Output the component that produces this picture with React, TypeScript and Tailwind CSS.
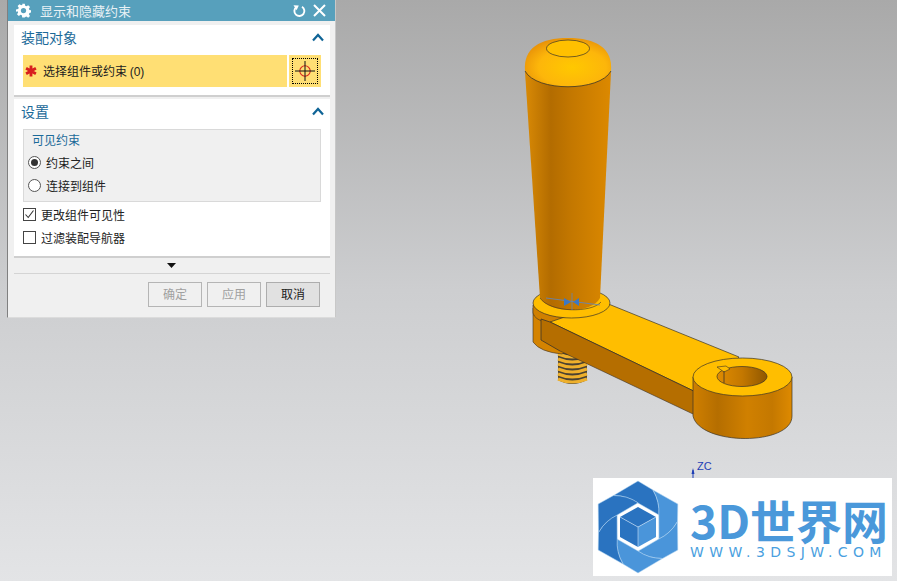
import React from "react";

const cjk = { fontFamily: '"Noto Sans CJK SC", "Liberation Sans", sans-serif' };

function Chevron() {
  return (
    <svg width="12" height="9" viewBox="0 0 12 9" className="block">
      <path d="M1 7.5 L6 2 L11 7.5" fill="none" stroke="#0f6496" strokeWidth="2.2" />
    </svg>
  );
}

function SectionHead({ title }: { title: string }) {
  return (
    <div className="h-[30px] flex items-center justify-between pl-[7px] pr-[6px] pb-[5px]">
      <span className="text-[14px] text-[#1b6a99]">{title}</span>
      <Chevron />
    </div>
  );
}

function Radio({ on, label }: { on?: boolean; label: string }) {
  return (
    <div className="flex items-center h-[23px] pl-[4px] gap-[5px]">
      <span className="w-[13px] h-[13px] rounded-full border border-[#555] bg-white flex items-center justify-center">
        {on && <span className="w-[7px] h-[7px] rounded-full bg-[#333]" />}
      </span>
      <span className="text-[12px] text-[#222]">{label}</span>
    </div>
  );
}

function Check({ on, label }: { on?: boolean; label: string }) {
  return (
    <div className="flex items-center h-[23px] gap-[5px]">
      <span className="w-[13px] h-[13px] border border-[#444] bg-white flex items-center justify-center">
        {on && (
          <svg width="11" height="11" viewBox="0 0 11 11">
            <path d="M1.5 5.5 L4.2 8.5 L9.5 1.5" fill="none" stroke="#333" strokeWidth="1.1" />
          </svg>
        )}
      </span>
      <span className="text-[12px] text-[#222]">{label}</span>
    </div>
  );
}

function Btn({ label, off }: { label: string; off?: boolean }) {
  return (
    <div
      className={
        off
          ? "w-[54px] h-[25px] border border-[#b5b5b5] bg-[#f0f0f0] text-[#a0a0a0] text-[12px] flex items-center justify-center pb-[1px]"
          : "w-[54px] h-[25px] border border-[#adadad] bg-[#e1e1e1] text-[#222] text-[12px] flex items-center justify-center pb-[1px]"
      }
    >
      {label}
    </div>
  );
}

function Dialog() {
  return (
    <div
      style={cjk}
      className="absolute left-[7px] top-0 w-[329px] h-[318px] bg-[#f0f0f0] border-l border-l-[#808080] border-r border-r-[#c8c8c8] border-b border-b-[#dcdcdc] flex flex-col"
    >
      <div className="h-[21px] bg-[#57a0bc] flex items-center pl-[8px] pr-[9px] shrink-0">
        <svg width="15" height="15" viewBox="0 0 24 24" className="block">
          <path
            d="M10 1h4l.7 3.2 2 .9 2.8-1.7 2.9 2.9-1.8 2.7.9 2 3.2.7v3.5l-3.2.7-.9 2 1.8 2.8-2.9 2.8-2.8-1.7-2 .8L14 23h-4l-.7-3.3-2-.8-2.8 1.7-2.9-2.8 1.8-2.8-.9-2L0 13.8v-3.5l3.5-.7.9-2-1.8-2.7 2.9-2.9 2.8 1.7 2-.9z"
            fill="#fff"
          />
          <circle cx="12" cy="12" r="4.2" fill="#57a0bc" />
        </svg>
        <span className="ml-[9px] text-[13px] text-[#e8f1f5] leading-none">显示和隐藏约束</span>
        <span className="ml-auto flex items-center gap-[7px]">
          <svg width="14" height="14" viewBox="0 0 14 14" className="block">
            <path d="M4.2 3.2 A5 5 0 1 0 10 2.8" fill="none" stroke="#fff" strokeWidth="1.9" />
            <path d="M1.5 1.2 L6.8 1.6 L4.6 6.2 Z" fill="#fff" />
          </svg>
          <svg width="13" height="13" viewBox="0 0 13 13" className="block">
            <path d="M1 1 L12 12 M12 1 L1 12" stroke="#fff" strokeWidth="2" />
          </svg>
        </span>
      </div>

      <div className="ml-[6px] mr-[5px] mt-[4px] bg-white h-[72px] border-b-2 border-b-[#cfcfcf] shrink-0">
        <SectionHead title="装配对象" />
        <div className="flex px-[9px] gap-[2px]">
          <div className="flex-1 h-[32px] bg-[#ffdf74] flex items-center pl-[2px] gap-[6px]">
            <svg width="12" height="12" viewBox="0 0 11 11" className="block">
              <path d="M5.5 0.5 V10.5 M1 3 L10 8 M10 3 L1 8" stroke="#d81e1e" strokeWidth="2.6" />
            </svg>
            <span className="text-[12px] text-[#222]">
              选择组件或约束 <span style={{ fontFamily: '"Liberation Sans", sans-serif' }}>(0)</span>
            </span>
          </div>
          <div className="w-[32px] h-[32px] bg-[#ffdf74] flex items-center justify-center">
            <div className="w-[26px] h-[26px] border border-dotted border-black flex items-center justify-center">
              <svg width="20" height="20" viewBox="0 0 20 20" className="block">
                <circle cx="10" cy="10" r="5.2" fill="none" stroke="#d8281e" strokeWidth="1.1" />
                <path d="M0 10 H20 M10 0 V20" stroke="#111" strokeWidth="1" />
              </svg>
            </div>
          </div>
        </div>
      </div>

      <div className="ml-[6px] mr-[5px] mt-[2px] bg-white h-[159px] border-b-2 border-b-[#cfcfcf] shrink-0">
        <SectionHead title="设置" />
        <div className="mx-[9px]">
          <div className="h-[73px] bg-[#f0f0f0] border border-[#d9d9d9] pt-[1px]">
            <div className="text-[12px] text-[#1b6a99] pl-[8px] h-[20px] leading-[18px]">可见约束</div>
            <Radio on label="约束之间" />
            <Radio label="连接到组件" />
          </div>
          <div className="mt-[1px]">
            <Check on label="更改组件可见性" />
            <Check label="过滤装配导航器" />
          </div>
        </div>
      </div>

      <div className="ml-[6px] mr-[5px] h-[16px] border-b border-b-[#d4d4d4] flex items-center justify-center shrink-0">
        <svg width="9" height="5" viewBox="0 0 9 5" className="block -translate-x-[1px]">
          <path d="M0 0 H9 L4.5 5 Z" fill="#111" />
        </svg>
      </div>

      <div className="flex justify-end gap-[5px] pr-[15px] pt-[8px]">
        <Btn off label="确定" />
        <Btn off label="应用" />
        <Btn label="取消" />
      </div>
    </div>
  );
}

function Part() {
  const line = "#3a3328";
  return (
    <svg width="897" height="581" viewBox="0 0 897 581" className="absolute left-0 top-0 block">
      <defs>
        <linearGradient id="cone" x1="0" x2="1" y1="0" y2="0">
          <stop offset="0" stopColor="#d98a05" />
          <stop offset="0.3" stopColor="#b36c00" />
          <stop offset="0.55" stopColor="#c47800" />
          <stop offset="1" stopColor="#dc8900" />
        </linearGradient>
        <radialGradient id="dome" cx="0.55" cy="0.6" r="0.65">
          <stop offset="0" stopColor="#ffc800" />
          <stop offset="0.6" stopColor="#fdb60a" />
          <stop offset="1" stopColor="#e58d08" />
        </radialGradient>
        <linearGradient id="ringSide" x1="0" x2="1" y1="0" y2="0">
          <stop offset="0" stopColor="#cf7f00" />
          <stop offset="0.25" stopColor="#b56e00" />
          <stop offset="0.55" stopColor="#d08000" />
          <stop offset="0.8" stopColor="#c47800" />
          <stop offset="1" stopColor="#de8a00" />
        </linearGradient>
        <linearGradient id="hole" x1="0" x2="1" y1="0" y2="0">
          <stop offset="0" stopColor="#e08c00" />
          <stop offset="0.5" stopColor="#c47800" />
          <stop offset="1" stopColor="#8f5700" />
        </linearGradient>
      </defs>

      {/* screw */}
      <path d="M558 352 H587 V380 Q572 388 558 380 Z" fill="#4a4232" />
      {[354, 359, 364, 369, 374, 379].map((y) => (
        <path key={y} d={`M558 ${y} Q572 ${y + 6} 587 ${y}`} fill="none" stroke="#eeb02c" strokeWidth="3" />
      ))}

      {/* collar block */}
      <path
        d="M533 308 V342 Q540 352 562 354 L600 330 L610 308 Z"
        fill="#d48300"
        stroke={line}
        strokeWidth="0.6"
      />
      <path d="M533 305 V313 C536 330 606 330 610 313 V305 Z" fill="#d08000" stroke={line} strokeWidth="0.6" />

      {/* arm */}
      <path d="M606 303 L739 357 L704 396 L550 322 Z" fill="#ffbe00" stroke={line} strokeWidth="0.7" />
      <path d="M541 319 L550 322 L704 396 V420 L693 414 L560 351 L541 340 Z" fill="#b56e00" />
      <path d="M541 319 L550 322 L704 396 V420 L693 414 M560 351 L541 340 V319" fill="none" stroke={line} strokeWidth="0.8" />
      <path d="M560 351 L693 414" fill="none" stroke={line} strokeWidth="0.6" />

      {/* collar top */}
      <ellipse cx="571.5" cy="303" rx="38.5" ry="15" fill="#ffbe00" stroke={line} strokeWidth="0.7" />

      {/* ring */}
      <path
        d="M693 377 V416 C700 446 792 446 792 416 V377 Z"
        fill="url(#ringSide)"
        stroke={line}
        strokeWidth="0.7"
      />
      <ellipse cx="742.5" cy="377" rx="49.5" ry="19" fill="#ffbe00" stroke={line} strokeWidth="0.7" />
      <ellipse cx="742" cy="376.5" rx="25" ry="10" fill="url(#hole)" stroke={line} strokeWidth="0.7" />
      <path d="M717 367 L726 366 L730 369 L724 372 Z" fill="#ffbe00" stroke={line} strokeWidth="0.6" />
      <path d="M724 371 V383" stroke={line} strokeWidth="0.8" />

      {/* handle */}
      <path d="M525 72 L611 72 L600 298 C592 314 550 314 540 298 Z" fill="url(#cone)" />
      <path d="M540 298 C550 313 592 313 601 302" fill="none" stroke={line} strokeWidth="0.6" />
      <path d="M525 71 C523 48 540 38 568 38 C596 38 613 48 611 71 C600 92 536 92 525 71 Z" fill="url(#dome)" />
      <path d="M525 71 C536 92 600 92 611 71" fill="none" stroke={line} strokeWidth="0.8" />
      <ellipse cx="568" cy="48.5" rx="21.5" ry="8.5" fill="#ffc000" stroke={line} strokeWidth="0.7" />

      {/* constraint marker */}
      <path d="M546 298 L600 305" stroke="#5a86c8" strokeWidth="0.8" />
      <path d="M571 302 L564 298 V306 Z M573 302 L579 298 V306 Z" fill="#3c78c4" />
      <path d="M572 293 V310" stroke="#5a86c8" strokeWidth="0.7" />

      {/* datum arrow */}
      <path d="M693 470 V478" stroke="#1f3fb5" strokeWidth="1" />
      <path d="M693 468 L691.5 474 H694.5 Z" fill="#1f3fb5" />
    </svg>
  );
}

function Logo() {
  const light = "#4a95da";
  const dark = "#2a73c0";
  const cols = [dark, light, light, light, dark, dark];
  return (
    <div className="absolute left-[593px] top-[478px] w-[299px] h-[98px] bg-white flex items-center">
      <svg width="90" height="98" viewBox="-45 -49 90 98" className="block shrink-0">
        {cols.map((c, i) => (
          <path
            key={i}
            transform={`rotate(${i * 60})`}
            d="M15 -37 Q22 -25 21 -12 L0 -24 Q-10.6 -31.5 -24.5 -31.5 L0 -46 Z"
            fill={c}
            stroke="#b5d7f3"
            strokeWidth="0.5"
          />
        ))}
        <path d="M0 -20 L18 -10 L0 0 L-18 -10 Z" fill={dark} />
        <path d="M-18 -10 L0 0 V20 L-18 10 Z" fill={dark} />
        <path d="M18 -10 L0 0 V20 L18 10 Z" fill={light} />
        <path d="M-18 -10 L0 0 L18 -10 M0 0 V20" fill="none" stroke="#cfe3f6" strokeWidth="0.6" />
      </svg>
      <div className="flex flex-col items-start ml-[7px] w-[198px]">
        <div
          className="text-[46px] leading-[50px] font-bold text-[#4a98da] whitespace-nowrap"
          style={{ fontFamily: '"Noto Sans CJK SC", "DejaVu Sans", sans-serif' }}
        >
          3D世界网
        </div>
        <div
          className="text-[14px] leading-[16px] text-[#4a9fe0] tracking-[5.4px] whitespace-nowrap"
          style={{ fontFamily: '"DejaVu Sans", sans-serif' }}
        >
          WWW.3DSJW.COM
        </div>
      </div>
    </div>
  );
}

export default function App() {
  return (
    <div className="relative w-[897px] h-[581px] overflow-hidden bg-gradient-to-b from-[#a9a9a9] via-[#cdced0] to-[#e3e4e6]">
      <Part />
      <div
        className="absolute left-[697px] top-[459px] text-[11px] leading-[14px] text-[#1f3fb5]"
        style={{ fontFamily: '"Liberation Sans", sans-serif' }}
      >
        ZC
      </div>
      <Logo />
      <Dialog />
    </div>
  );
}
